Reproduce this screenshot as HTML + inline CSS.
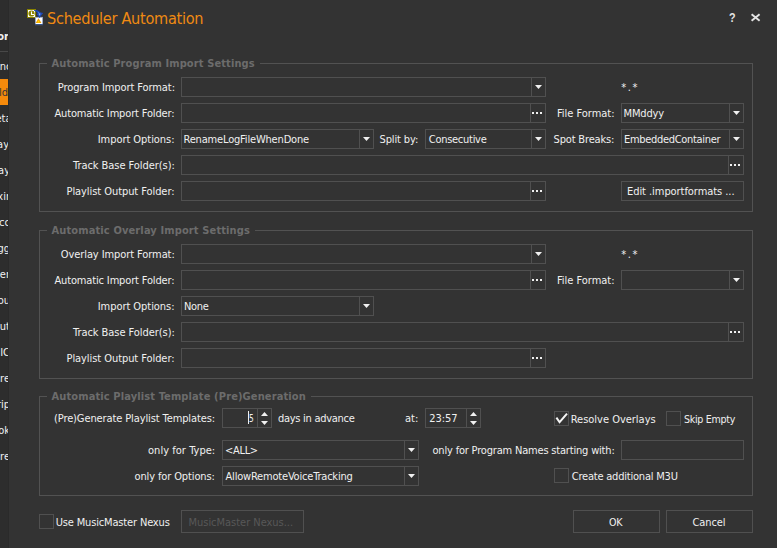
<!DOCTYPE html>
<html><head><meta charset="utf-8"><title>Scheduler Automation</title>
<style>
html,body{margin:0;padding:0;}
body{width:777px;height:548px;overflow:hidden;background:#333333;position:relative;font-family:"DejaVu Sans Condensed","Liberation Sans",sans-serif;font-size:11px;color:#f0f0f0;}
.a{position:absolute;white-space:nowrap;}
.t{position:absolute;white-space:nowrap;line-height:13px;height:13px;}
.bx{position:absolute;box-sizing:border-box;border:1px solid #505050;}
.gb{position:absolute;box-sizing:border-box;border:1px solid #525252;}
.gm{position:absolute;height:1px;background:#333333;}
.gt{color:#6c6c6c;font-weight:bold;font-family:'DejaVu Sans Condensed','DejaVu Sans','Liberation Sans',sans-serif;font-stretch:condensed;}
.dv{position:absolute;width:1px;background:#505050;}
.ar{position:absolute;width:7px;height:4px;}
.dot{position:absolute;width:2px;height:2px;background:#f0f0f0;}
.strip{position:absolute;left:0;top:0;width:8px;height:548px;background:#2d2d2d;overflow:hidden;}
.sl{position:absolute;right:0;white-space:nowrap;line-height:13px;height:13px;}
</style></head><body>

<div class="strip">
<div class="sl" style="top:30px;font-weight:bold;right:-1px">or</div>
<div class="a" style="left:0;top:51px;width:8px;height:1px;background:#484848"></div>
<div class="a" style="left:0;top:79px;width:8px;height:26px;background:#f58a0b"></div>
<div class="sl" style="top:60px;color:#f0f0f0;right:-3.5px">nc</div>
<div class="sl" style="top:86px;color:#333;right:0px">ld</div>
<div class="sl" style="top:112px;color:#f0f0f0;right:-3.5px">eta</div>
<div class="sl" style="top:138px;color:#f0f0f0;right:-1px">ay</div>
<div class="sl" style="top:164px;color:#f0f0f0;right:-2px">ay</div>
<div class="sl" style="top:190px;color:#f0f0f0;right:-2px">xir</div>
<div class="sl" style="top:216px;color:#f0f0f0;right:-2px">cc</div>
<div class="sl" style="top:242px;color:#f0f0f0;right:-2px">gg</div>
<div class="sl" style="top:268px;color:#f0f0f0;right:-2px">er</div>
<div class="sl" style="top:294px;color:#f0f0f0;right:-2px">ou</div>
<div class="sl" style="top:320px;color:#f0f0f0;right:-2px">ut</div>
<div class="sl" style="top:346px;color:#f0f0f0;right:-2px">IC</div>
<div class="sl" style="top:372px;color:#f0f0f0;right:-2px">re</div>
<div class="sl" style="top:398px;color:#f0f0f0;right:-2px">rip</div>
<div class="sl" style="top:424px;color:#f0f0f0;right:-2px">ok</div>
<div class="sl" style="top:450px;color:#f0f0f0;right:-2px">ore</div>
</div>
<div class="a" style="left:8px;top:0;width:1px;height:548px;background:#2a2a2a"></div>
<svg class="a" style="left:27px;top:9px" width="17" height="17" viewBox="0 0 17 17">
<rect x="0" y="0" width="9" height="9" fill="#8a8300"/>
<rect x="1" y="1" width="7" height="7" fill="#ffffff"/>
<circle cx="4.5" cy="4.5" r="3.1" fill="#8a8300"/>
<path d="M4.5 2.6V5.5H7" stroke="#ffffff" stroke-width="1.1" fill="none"/>
<rect x="8.5" y="8.3" width="7" height="7.4" fill="#fdfdfd" stroke="#9fb0d0" stroke-width="0.8"/>
<rect x="8" y="15.2" width="8" height="0.9" fill="#1c3c78"/>
<path d="M7 1 L10.5 1.2 L13.8 3.6 L16.2 4 L12.5 9 L9.4 4.8 L11 4.6 L9.6 3 L7 1.8Z" fill="#1c48b8"/>
<path d="M10.6 2.6 L12.6 4.6 L13.8 4.8 L12.4 6.8 L11.6 5.4 L12.2 5.2Z" fill="#7fa8f0"/>
<path d="M11.5 9.3 L14.4 14 L8.7 14Z" fill="#f0a000"/>
<path d="M11.5 11.2 L12.8 13.4 L10.2 13.4Z" fill="#ffd800"/>
</svg>
<div class="t" style="left:47.02px;top:9px;letter-spacing:-0.3px;transform:scaleX(0.9792);transform-origin:0 0;font-size:16.5px;line-height:20px;height:20px;color:#f08a12;">Scheduler Automation</div>
<div class="t" style="left:729.0px;top:10px;transform:scaleX(0.825);transform-origin:0 0;font-family:'Liberation Sans',sans-serif;font-size:13px;line-height:15px;height:15px;font-weight:bold;color:#e4e4e4;">?</div>
<svg class="a" style="left:750px;top:13px" width="11" height="9" viewBox="0 0 11 9"><path d="M1.6 1.2 L9.6 7.8 M9.6 1.2 L1.6 7.8" stroke="#e4e4e4" stroke-width="1.9" fill="none"/></svg>
<div class="gb" style="left:39px;top:63px;width:714px;height:149px"></div>
<div class="gm" style="left:47px;top:63px;width:213px"></div>
<div class="t" style="left:51.5px;top:57px;letter-spacing:0.109px;color:#6c6c6c;font-weight:bold;font-family:'DejaVu Sans Condensed','DejaVu Sans','Liberation Sans',sans-serif;font-stretch:condensed;">Automatic Program Import Settings</div>
<div class="t" style="left:57.75px;top:81px;letter-spacing:-0.083px;">Program Import Format:</div>
<div class="bx" style="left:181px;top:77px;width:365px;height:20px"></div>
<div class="dv" style="left:531px;top:78px;height:18px"></div>
<svg class="ar" style="left:535px;top:85px" viewBox="0 0 7 4"><path d="M0 0H7L3.5 4Z" fill="#f0f0f0"/></svg>
<div class="t" style="left:621.25px;top:81px;letter-spacing:1.625px;">*.*</div>
<div class="t" style="left:54.5px;top:107px;letter-spacing:-0.152px;">Automatic Import Folder:</div>
<div class="bx" style="left:181px;top:103px;width:365px;height:20px"></div>
<div class="dv" style="left:530px;top:104px;height:18px"></div>
<div class="dot" style="left:532px;top:112px"></div>
<div class="dot" style="left:536px;top:112px"></div>
<div class="dot" style="left:540px;top:112px"></div>
<div class="t" style="left:557.0px;top:107px;letter-spacing:-0.023px;">File Format:</div>
<div class="bx" style="left:621px;top:103px;width:123px;height:20px"></div>
<div class="dv" style="left:729px;top:104px;height:18px"></div>
<svg class="ar" style="left:733px;top:111px" viewBox="0 0 7 4"><path d="M0 0H7L3.5 4Z" fill="#f0f0f0"/></svg>
<div class="t" style="left:623.5px;top:107px;letter-spacing:-0.15px;">MMddyy</div>
<div class="t" style="left:97.75px;top:133px;letter-spacing:-0.054px;">Import Options:</div>
<div class="bx" style="left:181px;top:129px;width:193px;height:20px"></div>
<div class="dv" style="left:359px;top:130px;height:18px"></div>
<svg class="ar" style="left:363px;top:137px" viewBox="0 0 7 4"><path d="M0 0H7L3.5 4Z" fill="#f0f0f0"/></svg>
<div class="t" style="left:183.5px;top:133px;letter-spacing:-0.175px;">RenameLogFileWhenDone</div>
<div class="t" style="left:379.5px;top:133px;letter-spacing:-0.125px;">Split by:</div>
<div class="bx" style="left:425px;top:129px;width:121px;height:20px"></div>
<div class="dv" style="left:531px;top:130px;height:18px"></div>
<svg class="ar" style="left:535px;top:137px" viewBox="0 0 7 4"><path d="M0 0H7L3.5 4Z" fill="#f0f0f0"/></svg>
<div class="t" style="left:428.75px;top:133px;letter-spacing:-0.275px;">Consecutive</div>
<div class="t" style="left:553.5px;top:133px;letter-spacing:-0.159px;">Spot Breaks:</div>
<div class="bx" style="left:621px;top:129px;width:123px;height:20px"></div>
<div class="dv" style="left:729px;top:130px;height:18px"></div>
<svg class="ar" style="left:733px;top:137px" viewBox="0 0 7 4"><path d="M0 0H7L3.5 4Z" fill="#f0f0f0"/></svg>
<div class="t" style="left:623.5px;top:133px;letter-spacing:-0.3px;transform:scaleX(0.9979);transform-origin:0 0;">EmbeddedContainer</div>
<div class="t" style="left:73.0px;top:159px;letter-spacing:-0.05px;">Track Base Folder(s):</div>
<div class="bx" style="left:181px;top:155px;width:563px;height:20px"></div>
<div class="dv" style="left:728px;top:156px;height:18px"></div>
<div class="dot" style="left:730px;top:164px"></div>
<div class="dot" style="left:734px;top:164px"></div>
<div class="dot" style="left:738px;top:164px"></div>
<div class="t" style="left:66.5px;top:185px;letter-spacing:-0.068px;">Playlist Output Folder:</div>
<div class="bx" style="left:181px;top:181px;width:365px;height:20px"></div>
<div class="dv" style="left:530px;top:182px;height:18px"></div>
<div class="dot" style="left:532px;top:190px"></div>
<div class="dot" style="left:536px;top:190px"></div>
<div class="dot" style="left:540px;top:190px"></div>
<div class="bx" style="left:621px;top:181px;width:123px;height:20px"></div>
<div class="t" style="left:627.0px;top:185px;letter-spacing:-0.057px;">Edit .importformats ...</div>
<div class="gb" style="left:39px;top:230px;width:714px;height:149px"></div>
<div class="gm" style="left:47px;top:230px;width:208px"></div>
<div class="t" style="left:51.5px;top:224px;letter-spacing:0.125px;color:#6c6c6c;font-weight:bold;font-family:'DejaVu Sans Condensed','DejaVu Sans','Liberation Sans',sans-serif;font-stretch:condensed;">Automatic Overlay Import Settings</div>
<div class="t" style="left:60.75px;top:248px;letter-spacing:-0.083px;">Overlay Import Format:</div>
<div class="bx" style="left:181px;top:244px;width:365px;height:20px"></div>
<div class="dv" style="left:531px;top:245px;height:18px"></div>
<svg class="ar" style="left:535px;top:252px" viewBox="0 0 7 4"><path d="M0 0H7L3.5 4Z" fill="#f0f0f0"/></svg>
<div class="t" style="left:621.25px;top:248px;letter-spacing:1.625px;">*.*</div>
<div class="t" style="left:54.5px;top:274px;letter-spacing:-0.152px;">Automatic Import Folder:</div>
<div class="bx" style="left:181px;top:270px;width:365px;height:20px"></div>
<div class="dv" style="left:530px;top:271px;height:18px"></div>
<div class="dot" style="left:532px;top:279px"></div>
<div class="dot" style="left:536px;top:279px"></div>
<div class="dot" style="left:540px;top:279px"></div>
<div class="t" style="left:557.0px;top:274px;letter-spacing:-0.023px;">File Format:</div>
<div class="bx" style="left:621px;top:270px;width:123px;height:20px"></div>
<div class="dv" style="left:729px;top:271px;height:18px"></div>
<svg class="ar" style="left:733px;top:278px" viewBox="0 0 7 4"><path d="M0 0H7L3.5 4Z" fill="#f0f0f0"/></svg>
<div class="t" style="left:97.75px;top:300px;letter-spacing:-0.054px;">Import Options:</div>
<div class="bx" style="left:181px;top:296px;width:193px;height:20px"></div>
<div class="dv" style="left:359px;top:297px;height:18px"></div>
<svg class="ar" style="left:363px;top:304px" viewBox="0 0 7 4"><path d="M0 0H7L3.5 4Z" fill="#f0f0f0"/></svg>
<div class="t" style="left:184.0px;top:300px;letter-spacing:-0.3px;transform:scaleX(0.9959);transform-origin:0 0;">None</div>
<div class="t" style="left:73.0px;top:326px;letter-spacing:-0.05px;">Track Base Folder(s):</div>
<div class="bx" style="left:181px;top:322px;width:563px;height:20px"></div>
<div class="dv" style="left:728px;top:323px;height:18px"></div>
<div class="dot" style="left:730px;top:331px"></div>
<div class="dot" style="left:734px;top:331px"></div>
<div class="dot" style="left:738px;top:331px"></div>
<div class="t" style="left:66.5px;top:352px;letter-spacing:-0.068px;">Playlist Output Folder:</div>
<div class="bx" style="left:181px;top:348px;width:365px;height:20px"></div>
<div class="dv" style="left:530px;top:349px;height:18px"></div>
<div class="dot" style="left:532px;top:357px"></div>
<div class="dot" style="left:536px;top:357px"></div>
<div class="dot" style="left:540px;top:357px"></div>
<div class="gb" style="left:39px;top:396px;width:714px;height:100px"></div>
<div class="gm" style="left:47px;top:396px;width:264px"></div>
<div class="t" style="left:51.5px;top:390px;letter-spacing:0.119px;color:#6c6c6c;font-weight:bold;font-family:'DejaVu Sans Condensed','DejaVu Sans','Liberation Sans',sans-serif;font-stretch:condensed;">Automatic Playlist Template (Pre)Generation</div>
<div class="t" style="left:54.0px;top:412px;letter-spacing:-0.109px;">(Pre)Generate Playlist Templates:</div>
<div class="bx" style="left:222px;top:408px;width:50px;height:20px"></div>
<div class="dv" style="left:257px;top:409px;height:18px"></div>
<svg class="ar" style="left:261px;top:412px" viewBox="0 0 7 4"><path d="M0 4H7L3.5 0Z" fill="#f0f0f0"/></svg>
<svg class="ar" style="left:261px;top:421px" viewBox="0 0 7 4"><path d="M0 0H7L3.5 4Z" fill="#f0f0f0"/></svg>
<div class="t" style="left:249.25px;top:412px;transform:scaleX(0.75);transform-origin:0 0;">5</div>
<div class="a" style="left:248px;top:411px;width:1px;height:13px;background:#f0f0f0"></div>
<div class="t" style="left:278.0px;top:412px;letter-spacing:-0.286px;">days in advance</div>
<div class="t" style="left:405.0px;top:412px;">at:</div>
<div class="bx" style="left:425px;top:408px;width:56px;height:20px"></div>
<div class="dv" style="left:466px;top:409px;height:18px"></div>
<svg class="ar" style="left:470px;top:412px" viewBox="0 0 7 4"><path d="M0 4H7L3.5 0Z" fill="#f0f0f0"/></svg>
<svg class="ar" style="left:470px;top:421px" viewBox="0 0 7 4"><path d="M0 0H7L3.5 4Z" fill="#f0f0f0"/></svg>
<div class="t" style="left:429.25px;top:412px;letter-spacing:-0.062px;">23:57</div>
<div class="bx" style="left:554px;top:411px;width:15px;height:15px"></div>
<svg class="a" style="left:554px;top:411px" width="15" height="15" viewBox="0 0 15 15"><path d="M2.4 6.6 L5.6 11.2 L13 2.6" stroke="#f4f4f4" stroke-width="2" fill="none"/></svg>
<div class="t" style="left:570.75px;top:413px;letter-spacing:-0.017px;">Resolve Overlays</div>
<div class="bx" style="left:666px;top:411px;width:15px;height:15px"></div>
<div class="t" style="left:683.75px;top:413px;letter-spacing:-0.3px;transform:scaleX(0.9615);transform-origin:0 0;">Skip Empty</div>
<div class="t" style="left:148.0px;top:444px;letter-spacing:0.038px;">only for Type:</div>
<div class="bx" style="left:222px;top:440px;width:197px;height:20px"></div>
<div class="dv" style="left:404px;top:441px;height:18px"></div>
<svg class="ar" style="left:408px;top:448px" viewBox="0 0 7 4"><path d="M0 0H7L3.5 4Z" fill="#f0f0f0"/></svg>
<div class="t" style="left:225.25px;top:444px;letter-spacing:-0.3px;transform:scaleX(0.9984);transform-origin:0 0;">&lt;ALL&gt;</div>
<div class="t" style="left:432.5px;top:444px;letter-spacing:-0.188px;">only for Program Names starting with:</div>
<div class="bx" style="left:621px;top:440px;width:123px;height:20px"></div>
<div class="t" style="left:134.5px;top:470px;letter-spacing:-0.125px;">only for Options:</div>
<div class="bx" style="left:222px;top:466px;width:197px;height:20px"></div>
<div class="dv" style="left:404px;top:467px;height:18px"></div>
<svg class="ar" style="left:408px;top:474px" viewBox="0 0 7 4"><path d="M0 0H7L3.5 4Z" fill="#f0f0f0"/></svg>
<div class="t" style="left:225.5px;top:470px;letter-spacing:-0.196px;">AllowRemoteVoiceTracking</div>
<div class="bx" style="left:554px;top:468px;width:15px;height:15px"></div>
<div class="t" style="left:571.75px;top:470px;letter-spacing:-0.212px;">Create additional M3U</div>
<div class="bx" style="left:39px;top:514px;width:15px;height:15px"></div>
<div class="t" style="left:55.75px;top:516px;letter-spacing:-0.162px;">Use MusicMaster Nexus</div>
<div class="bx" style="left:181px;top:510px;width:123px;height:23px"></div>
<div class="t" style="left:188.5px;top:516px;letter-spacing:-0.026px;color:#585858;">MusicMaster Nexus...</div>
<div class="bx" style="left:573px;top:510px;width:87px;height:23px"></div>
<div class="t" style="left:608.75px;top:516px;letter-spacing:-0.2px;transform:scaleX(0.9628);transform-origin:0 0;">OK</div>
<div class="bx" style="left:666px;top:510px;width:87px;height:23px"></div>
<div class="t" style="left:692.5px;top:516px;letter-spacing:-0.1px;">Cancel</div>
</body></html>
